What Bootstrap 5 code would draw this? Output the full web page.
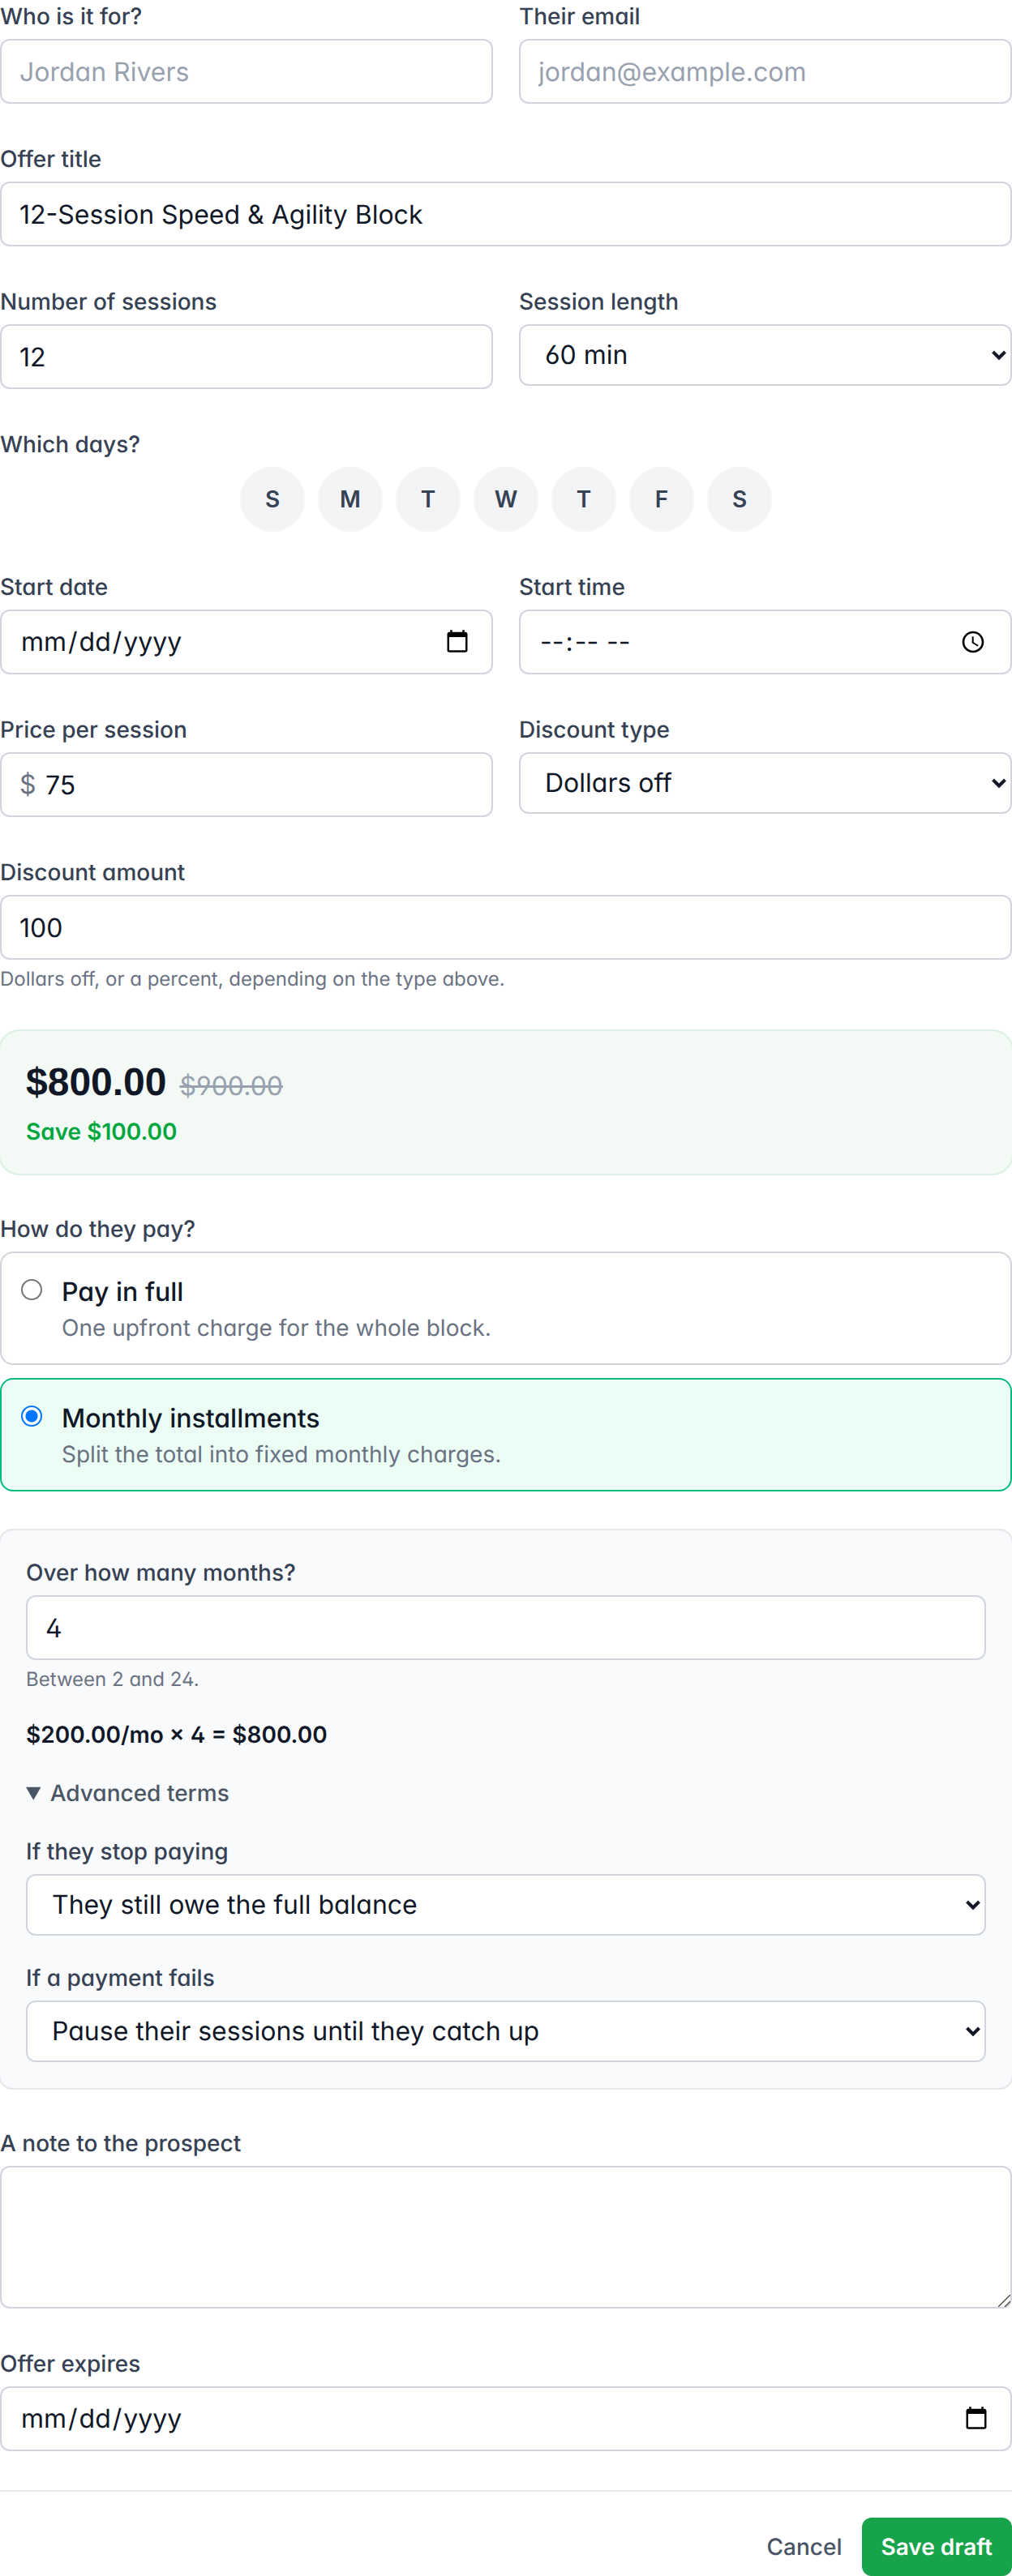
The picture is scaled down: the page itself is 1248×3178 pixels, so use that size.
<!DOCTYPE html>
<html lang="en">
<head>
<meta charset="utf-8">
<meta name="viewport" content="width=device-width, initial-scale=1">
<title>New offer</title>
<link href="https://cdn.jsdelivr.net/npm/bootstrap@5.3.0/dist/css/bootstrap.min.css" rel="stylesheet">
<style>
  :root {
    --ink: #101828;
    --label: #364153;
    --soft: #4a5565;
    --muted: #6a7282;
    --faint: #99a1af;
    --line: #d1d5dc;
    --rule: #e5e7eb;
    --brand: #16a34a;
  }
  body {
    font-family: Inter, "Liberation Sans", sans-serif;
    font-feature-settings: "cv02", "cv03", "cv04", "cv11";
    text-rendering: geometricPrecision;
    font-size: 32px;
    line-height: 48px;
    color: var(--ink);
    background: #fff;
  }
  .offer-form { gap: 48px; }
  .pair { gap: 48px 32px; }
  @media (min-width: 768px) { .pair { grid-template-columns: 1fr 1fr; align-items: start; } }

  .form-label, .legend-text {
    display: block;
    float: none;
    width: auto;
    margin: 0 0 8px;
    font-size: 28px;
    line-height: 40px;
    font-weight: 500;
    color: var(--label);
  }
  .form-control, .form-select {
    border: 2px solid var(--line);
    border-radius: 12px;
    color: var(--ink);
    background-color: #fff;
    font-size: 32px;
    line-height: 48px;
    font-feature-settings: inherit;
    text-rendering: inherit;
  }
  .form-control { padding: 14px 22px; min-height: 80px; }
  input.form-control { height: 80px; }
  .form-control::placeholder { color: var(--faint); }
  .form-select {
    height: 76px;
    padding: 14px 40px 14px 30px;
    line-height: 44px;
    background-image: url("data:image/svg+xml,%3Csvg xmlns='http://www.w3.org/2000/svg' viewBox='0 0 20 12'%3E%3Cpath d='M2.5 2 10 9.5 17.5 2' fill='none' stroke='%23101828' stroke-width='4'/%3E%3C/svg%3E");
    background-size: 20px 12px;
    background-position: right 4px center;
  }
  .form-control::-webkit-calendar-picker-indicator { width: 32px; height: 32px; padding: 0; margin-right: 4px; }
  .form-control[type="time"]::-webkit-calendar-picker-indicator { margin-right: 8px; }
  .form-control::-webkit-datetime-edit-month-field,
  .form-control::-webkit-datetime-edit-day-field,
  .form-control::-webkit-datetime-edit-year-field,
  .form-control::-webkit-datetime-edit-hour-field,
  .form-control::-webkit-datetime-edit-minute-field,
  .form-control::-webkit-datetime-edit-ampm-field { padding: 2px; }
  .form-control::-webkit-resizer {
    background: url("data:image/svg+xml,%3Csvg xmlns='http://www.w3.org/2000/svg' viewBox='0 0 15 15'%3E%3Cpath d='M0 15 15 0M8 15 15 8' fill='none' stroke='%23444' stroke-width='1.3'/%3E%3C/svg%3E") right bottom / 15px 15px no-repeat;
  }
  .hint { margin: 8px 0 0; font-size: 24px; line-height: 32px; color: var(--muted); }

  .day {
    width: 80px;
    height: 80px;
    border: 0;
    border-radius: 50%;
    padding: 0;
    background: #f3f4f6;
    color: var(--label);
    font-size: 28px;
    line-height: 40px;
    font-weight: 600;
  }
  .day:hover { background: var(--rule); }
  .day-row { gap: 16px; }

  .money-sign { left: 24px; color: var(--muted); }
  .form-control.with-sign { padding-left: 54px; }

  .price-box { padding: 32px; border-radius: 24px; background: #f3faf6; box-shadow: 0 0 0 2px #dcf1e4; }
  .price-line { gap: 16px; }
  .price-now { font-family: "Liberation Sans", Arial, sans-serif; font-size: 48px; line-height: 64px; font-weight: 700; }
  .price-was { font-size: 32px; line-height: 48px; color: var(--faint); }
  .price-save { margin-top: 8px; font-size: 28px; line-height: 40px; font-weight: 600; color: #00a63e; }

  .choice { gap: 24px; padding: 24px; border: 2px solid var(--line); border-radius: 16px; cursor: pointer; }
  .choice + .choice { margin-top: 16px; }
  .choice:has(:checked) { border-color: #00bc7d; background: #ecfdf5; }
  .choice input {
    appearance: none;
    flex: none;
    width: 26px;
    height: 26px;
    margin: 8px 0 0;
    border: 2px solid #767676;
    border-radius: 50%;
    background: #fff;
  }
  .choice input:checked { border-color: #0075ff; background: radial-gradient(circle, #0075ff 7px, #fff 8px); }
  .choice-name { font-weight: 500; }
  .choice-note { font-size: 28px; line-height: 40px; color: var(--muted); }

  .plan-box { gap: 32px; padding: 32px; border-radius: 16px; background: #f9fafb; box-shadow: 0 0 0 2px var(--rule); }
  .plan-sum { font-size: 28px; line-height: 40px; font-weight: 600; }
  .terms summary { font-size: 28px; line-height: 40px; font-weight: 500; color: var(--soft); }
  .terms-fields { gap: 32px; margin-top: 32px; }

  .form-actions { gap: 24px; padding-top: 32px; border-top: 2px solid var(--rule); }
  .form-actions .btn { border: 0; border-radius: 12px; padding: 16px 24px; font-size: 28px; line-height: 40px; text-rendering: inherit; }
  .form-actions .btn-cancel { padding: 16px 0; font-weight: 500; color: var(--soft); }
  .form-actions .btn-save { font-weight: 600; color: #fff; background: var(--brand); }
</style>
</head>
<body>
<form class="offer-form d-flex flex-column">
  <div class="pair d-grid">
    <div>
      <label class="form-label" for="who">Who is it for?</label>
      <input class="form-control" id="who" type="text" placeholder="Jordan Rivers">
    </div>
    <div>
      <label class="form-label" for="email">Their email</label>
      <input class="form-control" id="email" type="email" placeholder="jordan@example.com">
    </div>
  </div>

  <div>
    <label class="form-label" for="title">Offer title</label>
    <input class="form-control" id="title" type="text" value="12-Session Speed &amp; Agility Block">
  </div>

  <div class="pair d-grid">
    <div>
      <label class="form-label" for="count">Number of sessions</label>
      <input class="form-control" id="count" type="number" value="12">
    </div>
    <div>
      <label class="form-label" for="length">Session length</label>
      <select class="form-select" id="length"><option>30 min</option><option selected>60 min</option><option>90 min</option></select>
    </div>
  </div>

  <fieldset>
    <legend class="legend-text">Which days?</legend>
    <div class="day-row d-flex flex-wrap justify-content-center">
      <button class="day" type="button" aria-label="Sunday">S</button>
      <button class="day" type="button" aria-label="Monday">M</button>
      <button class="day" type="button" aria-label="Tuesday">T</button>
      <button class="day" type="button" aria-label="Wednesday">W</button>
      <button class="day" type="button" aria-label="Thursday">T</button>
      <button class="day" type="button" aria-label="Friday">F</button>
      <button class="day" type="button" aria-label="Saturday">S</button>
    </div>
  </fieldset>

  <div class="pair d-grid">
    <div>
      <label class="form-label" for="start-date">Start date</label>
      <input class="form-control" id="start-date" type="date">
    </div>
    <div>
      <label class="form-label" for="start-time">Start time</label>
      <input class="form-control" id="start-time" type="time">
    </div>
  </div>

  <div class="pair d-grid">
    <div>
      <label class="form-label" for="price">Price per session</label>
      <div class="position-relative">
        <span class="money-sign position-absolute top-50 translate-middle-y">$</span>
        <input class="form-control with-sign" id="price" type="number" value="75">
      </div>
    </div>
    <div>
      <label class="form-label" for="discount-type">Discount type</label>
      <select class="form-select" id="discount-type"><option>Dollars off</option><option>Percent off</option></select>
    </div>
  </div>

  <div>
    <label class="form-label" for="discount">Discount amount</label>
    <input class="form-control" id="discount" type="number" value="100" aria-describedby="discount-hint">
    <p class="hint" id="discount-hint">Dollars off, or a percent, depending on the type above.</p>
  </div>

  <div class="price-box">
    <div class="price-line d-flex align-items-baseline">
      <span class="price-now">$800.00</span>
      <s class="price-was">$900.00</s>
    </div>
    <div class="price-save">Save $100.00</div>
  </div>

  <fieldset>
    <legend class="legend-text">How do they pay?</legend>
    <label class="choice d-flex align-items-start">
      <input type="radio" name="pay" value="full">
      <span>
        <span class="choice-name d-block">Pay in full</span>
        <span class="choice-note d-block">One upfront charge for the whole block.</span>
      </span>
    </label>
    <label class="choice d-flex align-items-start">
      <input type="radio" name="pay" value="monthly" checked>
      <span>
        <span class="choice-name d-block">Monthly installments</span>
        <span class="choice-note d-block">Split the total into fixed monthly charges.</span>
      </span>
    </label>
  </fieldset>

  <div class="plan-box d-flex flex-column">
    <div>
      <label class="form-label" for="months">Over how many months?</label>
      <input class="form-control" id="months" type="number" min="2" max="24" value="4" aria-describedby="months-hint">
      <p class="hint" id="months-hint">Between 2 and 24.</p>
    </div>
    <div class="plan-sum">$200.00/mo × 4 = $800.00</div>
    <details class="terms" open>
      <summary>Advanced terms</summary>
      <div class="terms-fields d-flex flex-column">
        <div>
          <label class="form-label" for="stop">If they stop paying</label>
          <select class="form-select" id="stop"><option>They still owe the full balance</option></select>
        </div>
        <div>
          <label class="form-label" for="fail">If a payment fails</label>
          <select class="form-select" id="fail"><option>Pause their sessions until they catch up</option></select>
        </div>
      </div>
    </details>
  </div>

  <div>
    <label class="form-label" for="note">A note to the prospect</label>
    <textarea class="form-control" id="note" rows="3"></textarea>
  </div>

  <div>
    <label class="form-label" for="expires">Offer expires</label>
    <input class="form-control" id="expires" type="date">
  </div>

  <div class="form-actions d-flex justify-content-end">
    <button class="btn btn-cancel" type="button">Cancel</button>
    <button class="btn btn-save" type="submit">Save draft</button>
  </div>
</form>
<script src="https://cdn.jsdelivr.net/npm/bootstrap@5.3.0/dist/js/bootstrap.bundle.min.js"></script>
</body>
</html>
